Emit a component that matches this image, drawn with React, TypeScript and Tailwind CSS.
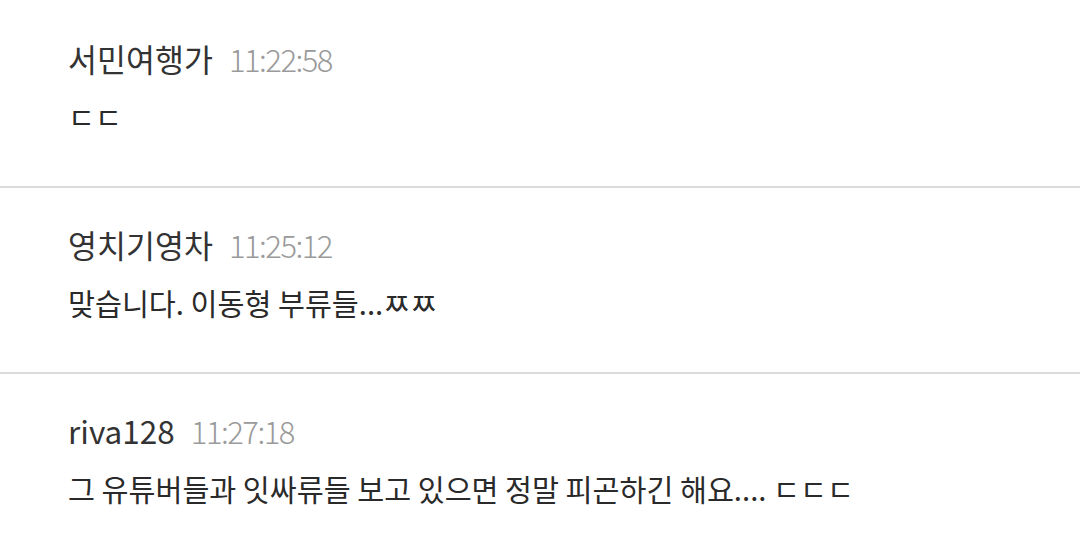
import React from 'react';

const comments = [
  { name: '서민여행가', time: '11:22:58', text: 'ㄷㄷ' },
  { name: '영치기영차', time: '11:25:12', text: '맞습니다. 이동형 부류들...ㅉㅉ' },
  { name: 'riva128', time: '11:27:18', text: '그 유튜버들과 잇싸류들 보고 있으면 정말 피곤하긴 해요.... ㄷㄷㄷ' },
];

const App = () => {
  return (
    <div
      className="w-[1080px] h-[553px] bg-white overflow-hidden pt-[2px]"
      style={{ fontFamily: '"Noto Sans CJK KR", "Noto Sans", sans-serif' }}
    >
      {comments.map((c, i) => (
        <div
          key={c.time}
          className={
            i < comments.length - 1
              ? 'h-[186px] border-b-2 border-[#dadada] px-[68px] pt-[36px]'
              : 'h-[186px] px-[68px] pt-[36px]'
          }
        >
          <div className="flex items-baseline gap-[16px] h-[40px] leading-[40px]">
            <span className="text-[31.5px] text-[#333333]">{c.name}</span>
            <span className="text-[31px] font-light text-[#9a9a9a] tracking-[-1.5px]">{c.time}</span>
          </div>
          <p className="mt-[18px] h-[40px] leading-[40px] text-[29.3px] text-[#2a2a2a]">{c.text}</p>
        </div>
      ))}
    </div>
  );
};

export default App;
